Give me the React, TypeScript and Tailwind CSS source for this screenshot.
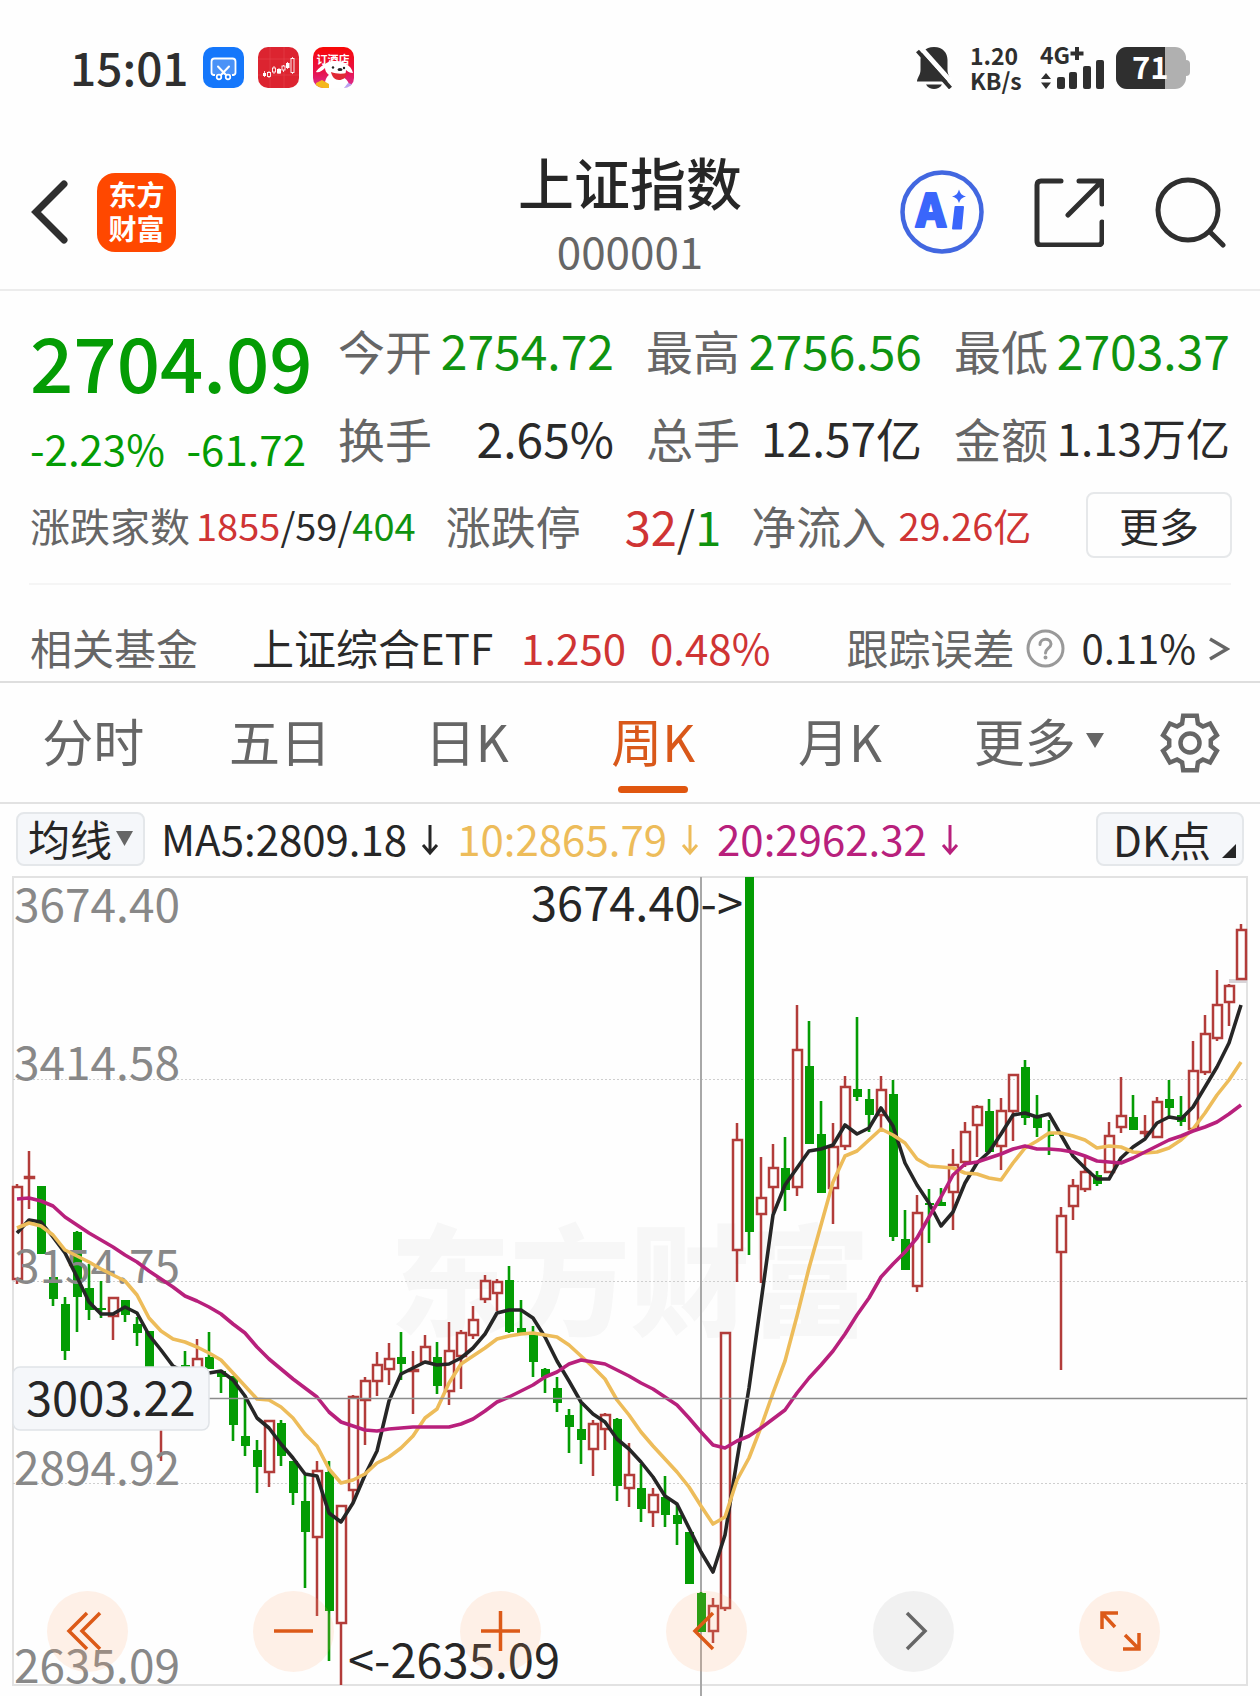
import React from "react";

const GREEN = "#049c04";
const RED = "#b23c3a";

// [direction, high, body top, body bottom, low] in chart units
type Candle = ["u" | "d", number, number, number, number];

const candles: Candle[] = [
  ["u", 1184, 1187, 1279, 1284], ["u", 1151, 1177, 1178, 1209], ["d", 1186, 1186, 1254, 1254], ["d", 1277, 1277, 1299, 1306],
  ["d", 1297, 1304, 1351, 1360], ["d", 1231, 1232, 1297, 1332], ["d", 1264, 1288, 1310, 1320], ["d", 1281, 1308, 1310, 1318],
  ["u", 1298, 1298, 1316, 1340], ["d", 1300, 1300, 1315, 1322], ["d", 1317, 1324, 1333, 1346], ["d", 1331, 1331, 1375, 1380],
  ["u", 1390, 1395, 1420, 1461], ["u", 1376, 1380, 1400, 1404], ["d", 1351, 1365, 1372, 1376], ["u", 1339, 1359, 1376, 1380],
  ["d", 1332, 1357, 1369, 1369], ["d", 1371, 1371, 1377, 1393], ["d", 1376, 1376, 1425, 1441], ["d", 1395, 1436, 1446, 1456],
  ["d", 1440, 1450, 1467, 1493], ["u", 1420, 1421, 1472, 1487], ["d", 1420, 1423, 1456, 1466], ["d", 1461, 1461, 1493, 1505],
  ["d", 1475, 1501, 1532, 1588], ["u", 1461, 1471, 1537, 1616], ["d", 1461, 1472, 1611, 1661], ["u", 1506, 1506, 1623, 1685],
  ["u", 1395, 1397, 1490, 1503], ["u", 1377, 1381, 1400, 1445], ["u", 1352, 1365, 1381, 1396], ["u", 1343, 1359, 1369, 1385],
  ["d", 1332, 1357, 1364, 1380], ["u", 1351, 1370, 1371, 1414], ["u", 1335, 1347, 1362, 1362], ["d", 1342, 1357, 1386, 1394],
  ["u", 1322, 1351, 1391, 1405], ["u", 1330, 1333, 1356, 1389], ["u", 1306, 1320, 1335, 1339], ["u", 1275, 1281, 1299, 1303],
  ["u", 1279, 1282, 1293, 1311], ["d", 1266, 1280, 1332, 1333], ["d", 1300, 1328, 1334, 1334], ["d", 1326, 1335, 1362, 1377],
  ["d", 1368, 1369, 1377, 1393], ["d", 1377, 1388, 1403, 1412], ["d", 1409, 1415, 1427, 1453], ["d", 1402, 1429, 1440, 1464],
  ["u", 1420, 1424, 1449, 1476], ["u", 1413, 1415, 1429, 1450], ["d", 1418, 1419, 1486, 1501], ["u", 1443, 1475, 1488, 1507],
  ["d", 1464, 1488, 1509, 1522], ["u", 1488, 1495, 1512, 1527], ["d", 1476, 1497, 1515, 1527], ["d", 1505, 1515, 1524, 1545],
  ["d", 1532, 1532, 1584, 1584], ["d", 1592, 1593, 1632, 1632], ["u", 1598, 1606, 1631, 1643], ["u", 1333, 1333, 1608, 1611],
  ["u", 1123, 1140, 1250, 1282], ["d", 877, 877, 1232, 1255], ["u", 1157, 1198, 1214, 1283], ["u", 1144, 1168, 1187, 1213],
  ["d", 1137, 1168, 1190, 1211], ["u", 1005, 1050, 1187, 1196], ["d", 1021, 1066, 1144, 1144], ["d", 1101, 1134, 1193, 1193],
  ["u", 1123, 1147, 1188, 1224], ["u", 1076, 1087, 1146, 1150], ["d", 1017, 1089, 1097, 1101], ["d", 1089, 1099, 1115, 1132],
  ["u", 1076, 1090, 1115, 1128], ["d", 1080, 1094, 1237, 1241], ["d", 1210, 1239, 1270, 1270], ["u", 1195, 1213, 1286, 1292],
  ["d", 1189, 1203, 1205, 1243], ["d", 1188, 1202, 1206, 1206], ["u", 1149, 1165, 1192, 1230], ["u", 1122, 1132, 1162, 1167],
  ["u", 1105, 1107, 1125, 1157], ["d", 1099, 1111, 1152, 1152], ["u", 1098, 1111, 1146, 1170], ["u", 1075, 1075, 1111, 1141],
  ["d", 1060, 1067, 1118, 1125], ["d", 1095, 1116, 1128, 1137], ["d", 1120, 1134, 1136, 1155], ["u", 1207, 1216, 1252, 1370],
  ["u", 1179, 1186, 1206, 1220], ["u", 1157, 1172, 1189, 1192], ["d", 1171, 1175, 1184, 1186], ["u", 1122, 1136, 1172, 1172],
  ["u", 1077, 1116, 1127, 1133], ["d", 1095, 1117, 1130, 1130], ["u", 1115, 1132, 1133, 1137], ["u", 1097, 1102, 1137, 1137],
  ["d", 1080, 1099, 1108, 1117], ["d", 1096, 1115, 1122, 1126], ["u", 1041, 1071, 1129, 1129], ["u", 1015, 1034, 1072, 1075],
  ["u", 970, 1005, 1038, 1041], ["u", 984, 986, 1002, 1026], ["u", 924, 930, 979, 979],
];

const ma5 = [
  1233, 1220, 1222, 1237, 1253, 1277, 1302, 1314, 1314, 1307, 1313, 1335, 1350, 1366, 1372, 1372, 1373, 1371, 1380, 1396,
  1418, 1428, 1444, 1458, 1474, 1476, 1513, 1522, 1503, 1475, 1451, 1401, 1374, 1368, 1362, 1365, 1364, 1358, 1348, 1334,
  1313, 1310, 1310, 1318, 1337, 1361, 1381, 1402, 1414, 1422, 1439, 1449, 1462, 1477, 1496, 1504, 1528, 1552, 1572, 1535,
  1460, 1388, 1302, 1215, 1185, 1168, 1151, 1149, 1145, 1125, 1134, 1128, 1108, 1126, 1163, 1185, 1203, 1226, 1212, 1183,
  1163, 1152, 1134, 1115, 1113, 1117, 1114, 1135, 1156, 1168, 1179, 1179, 1158, 1147, 1139, 1123, 1117, 1119, 1107, 1087,
  1067, 1043, 1005,
];
const ma10 = [
  1228, 1223, 1226, 1235, 1250, 1256, 1262, 1269, 1275, 1281, 1295, 1318, 1331, 1339, 1342, 1347, 1353, 1360, 1373, 1386,
  1399, 1400, 1407, 1418, 1434, 1446, 1469, 1483, 1480, 1474, 1463, 1457, 1448, 1436, 1418, 1409, 1383, 1364, 1356, 1348,
  1339, 1336, 1334, 1333, 1335, 1337, 1345, 1356, 1367, 1379, 1400, 1415, 1432, 1446, 1459, 1472, 1487, 1506, 1524, 1517,
  1480, 1458, 1427, 1393, 1361, 1316, 1268, 1225, 1182, 1156, 1151, 1140, 1129, 1135, 1143, 1159, 1166, 1167, 1168, 1173,
  1174, 1178, 1180, 1163, 1148, 1141, 1133, 1133, 1136, 1140, 1148, 1146, 1147, 1152, 1153, 1152, 1148, 1140, 1129, 1113,
  1095, 1080, 1062,
];
const ma20 = [
  1199, 1198, 1201, 1206, 1217, 1225, 1233, 1240, 1247, 1255, 1262, 1271, 1279, 1287, 1296, 1301, 1307, 1314, 1324, 1333,
  1347, 1359, 1369, 1379, 1388, 1397, 1412, 1422, 1426, 1430, 1431, 1429, 1428, 1427, 1427, 1427, 1427, 1424, 1419, 1411,
  1402, 1397, 1391, 1385, 1377, 1372, 1364, 1360, 1362, 1364, 1370, 1376, 1383, 1389, 1397, 1405, 1418, 1432, 1445, 1448,
  1441, 1436, 1428, 1419, 1410, 1393, 1378, 1365, 1351, 1334, 1315, 1298, 1277, 1264, 1252, 1238, 1217, 1197, 1175, 1164,
  1162, 1158, 1154, 1149, 1146, 1149, 1149, 1150, 1152, 1156, 1161, 1162, 1163, 1158, 1152, 1146, 1140, 1136, 1131, 1127,
  1122, 1114, 1105,
];

const candleX = (i: number) => 17 + i * 12;
const toPoints = (values: number[]) => values.map((y, i) => `${candleX(i)},${y}`).join(" ");

const gearPath = (() => {
  const pts: string[] = [];
  for (let t = 0; t < 6; t++) {
    for (const [off, r] of [[-22, 21], [-14, 28], [14, 28], [22, 21]]) {
      const a = ((t * 60 + off - 90) * Math.PI) / 180;
      pts.push(`${(32 + r * Math.cos(a)).toFixed(1)} ${(32 + r * Math.sin(a)).toFixed(1)}`);
    }
  }
  return `M${pts.join("L")}Z`;
})();

function StatusBar() {
  return (
    <div className="flex h-[135px] items-center justify-between pr-[70px] pl-[70px] text-[#2f2f2f]">
      <div className="flex items-center gap-[14px]">
        <span className="pb-1 text-[46px] leading-[56px] font-medium">15:01</span>
        <svg className="size-[41px]" viewBox="0 0 41 41" aria-label="截屏">
          <rect width="41" height="41" rx="10" fill="#1577fb" />
          <path d="M12 28h-1.500a2.500 2.500 0 0 1-2-2.500V14.500a3 3 0 0 1 3-3h18a3 3 0 0 1 3 3V25.500a2.500 2.500 0 0 1-2 2.500H29" fill="#4a92f7" stroke="#fff" strokeWidth="1.800" />
          <path d="M15 19.500L23.500 28.500M26 19.500L17.500 28.500" stroke="#fff" strokeWidth="2" strokeLinecap="round" />
          <circle cx="16" cy="30" r="2.300" fill="#1577fb" stroke="#fff" strokeWidth="1.700" />
          <circle cx="25" cy="30" r="2.300" fill="#1577fb" stroke="#fff" strokeWidth="1.700" />
        </svg>
        <svg className="size-[41px]" viewBox="0 0 41 41" aria-label="行情">
          <rect width="41" height="41" rx="10" fill="#dc2430" />
          <path d="M0 12h41M0 28h41M12 0v41M26 0v41" stroke="#e5454f" strokeWidth="0.600" />
          <path d="M6.500 24v6M11 24v7M16 19v8M21 21v6M25.500 18v7M29.500 15v7M34.500 10v17" stroke="#fff" strokeWidth="0.800" />
          <rect x="5" y="26" width="3" height="3" fill="#fff" />
          <rect x="9.500" y="25.500" width="3" height="4" fill="#dc2430" stroke="#fff" strokeWidth="0.900" />
          <rect x="14.500" y="21" width="3" height="4" fill="#dc2430" stroke="#fff" strokeWidth="0.900" />
          <rect x="19" y="22" width="4" height="4.500" fill="#fff" />
          <rect x="24" y="19" width="3" height="4" fill="#dc2430" stroke="#fff" strokeWidth="0.900" />
          <rect x="28" y="16" width="3.500" height="5" fill="#fff" />
          <rect x="33" y="11.500" width="3" height="14" fill="#dc2430" stroke="#fff" strokeWidth="0.900" />
        </svg>
        <svg className="size-[41px]" viewBox="0 0 41 41" aria-label="订酒店">
          <defs>
            <linearGradient id="hotel" x1="0" y1="0" x2="0" y2="1">
              <stop offset="0" stopColor="#f80806" />
              <stop offset="0.600" stopColor="#e8124a" />
              <stop offset="1" stopColor="#d9309a" />
            </linearGradient>
            <clipPath id="hotelClip"><rect width="41" height="41" rx="10" /></clipPath>
          </defs>
          <g clipPath="url(#hotelClip)">
            <rect width="41" height="41" fill="url(#hotel)" />
            <path d="M12 41c-1-7 2-12 4-13c-3-2-4-5-4-7c-3 3-6 5-9 4c1-2 6-7 9-8c4-4 18-4 21 0c4 2 6 5 7 9c-3 0-5-1-7-3c0 3-1 5-3 7c3 2 7 5 6 11z" fill="#fff" />
            <circle cx="20" cy="20.500" r="1.200" fill="#222" />
            <circle cx="31" cy="21" r="1.200" fill="#222" />
            <ellipse cx="27" cy="22.500" rx="2.500" ry="1.600" fill="#222" />
            <path d="M18 25c5 2 11 2 16 1c-1 5-4 7-8 7s-7-3-8-8z" fill="#e02a35" />
            <path d="M3 41v-5l6-3l7 4v4z" fill="#f5b81c" />
            <path d="M31 41l4-5l6 2v3z" fill="#b9a4f2" />
            <text x="20" y="17" textAnchor="middle" fontSize="11" fontWeight="700" fill="#fff">订酒店</text>
          </g>
        </svg>
      </div>
      <div className="flex items-center">
        <svg className="h-[42px] w-[36px]" viewBox="0 0 36 42" fill="#2f2f2f" aria-label="静音">
          <path d="M18 0C27 0 31.500 6 31.500 13V23C31.500 28 35 31 35 34.500H1C1 31 4.500 28 4.500 23V13C4.500 6 9 0 18 0Z" />
          <path d="M10 37.500H26C24 41 21 42 18 42S12 41 10 37.500Z" />
          <path d="M4 0L38 38" stroke="#fff" strokeWidth="5" />
          <path d="M1.500 4L34.500 41" stroke="#2f2f2f" strokeWidth="4" />
        </svg>
        <div className="ml-[18px] flex w-[54px] flex-col text-[23px] leading-[25px] font-bold">
          <span>1.20</span>
          <span>KB/s</span>
        </div>
        <svg className="ml-[16px] h-[42px] w-[66px]" viewBox="0 0 66 42" fill="#2f2f2f" aria-label="4G+">
          <text x="0" y="17" fontSize="23" fontWeight="700">4G</text>
          <path d="M35 0h4v4.500h4.500v4h-4.500v4.500h-4v-4.500h-4.500v-4h4.500z" />
          <path d="M6 26l5 6h-10zM6 42l5-6.500h-10z" />
          <rect x="17" y="30" width="8" height="12" rx="2" />
          <rect x="29" y="25" width="8" height="17" rx="2" />
          <rect x="43" y="19" width="8" height="23" rx="2" />
          <rect x="56" y="13" width="8" height="29" rx="2" />
        </svg>
        <svg className="ml-[10px] h-[42px] w-[74px]" viewBox="0 0 74 42" aria-label="电量 71">
          <rect x="66" y="13" width="8" height="16" rx="4" fill="#b0b0b0" />
          <rect width="70" height="42" rx="11" fill="#b0b0b0" />
          <path d="M11 0H49V42H11A11 11 0 0 1 0 31V11A11 11 0 0 1 11 0Z" fill="#2f2f2f" />
          <text x="16" y="32" fontSize="31" fontWeight="700" fill="#fff">71</text>
        </svg>
      </div>
    </div>
  );
}

function Header() {
  return (
    <header className="grid h-[156px] grid-cols-[1fr_auto_1fr] items-center border-b-2 border-[#ececec] px-[30px]">
      <div className="flex items-center gap-[27px]">
        <button aria-label="返回">
          <svg className="h-[66px] w-[40px]" viewBox="0 0 40 66" fill="none" stroke="#2f2f2f" strokeWidth="7" strokeLinecap="round">
            <path d="M34 5L6 33L34 61" />
          </svg>
        </button>
        <button className="flex size-[79px] flex-col items-center justify-center rounded-[18px] bg-[#ff4800] pb-0.5 text-[28px] leading-[34px] font-bold text-white">
          <span>东方</span>
          <span>财富</span>
        </button>
      </div>
      <div className="flex flex-col items-center pt-1">
        <h1 className="text-[56px] leading-[72px] font-medium text-[#262626]">上证指数</h1>
        <p className="text-[44px] leading-[66px] text-[#666]">000001</p>
      </div>
      <div className="flex items-center justify-end gap-[50px] pr-1">
        <button aria-label="Ai">
          <svg className="size-[84px]" viewBox="0 0 84 84">
            <circle cx="42" cy="42" r="39.500" fill="none" stroke="#4267e0" strokeWidth="4.500" />
            <text x="16" y="57" fontSize="45" fontWeight="900" fill="#3a66fb" stroke="#3a66fb" strokeWidth="2" strokeLinejoin="round">A</text>
            <path d="M55.500 37h7.500l-2 21.500h-8z" fill="#3a66fb" stroke="#3a66fb" strokeWidth="2" strokeLinejoin="round" />
            <path d="M59 19.500C60.500 24 61.500 25 66 26.500C61.500 28 60.500 29 59 33C57.500 29 56.500 28 52 26.500C56.500 25 57.500 24 59 19.500Z" fill="#3a66fb" />
          </svg>
        </button>
        <button aria-label="分享">
          <svg className="size-[70px]" viewBox="0 0 70 70" fill="none" stroke="#2f2f2f" strokeWidth="5" strokeLinecap="round" strokeLinejoin="round">
            <path d="M27 4H7Q3 4 3 8V64Q3 68 7 68H64Q68 68 68 64V45" />
            <path d="M45 4H68V27M67 5L34 38" />
          </svg>
        </button>
        <button aria-label="搜索">
          <svg className="size-[72px]" viewBox="0 0 72 72" fill="none" stroke="#2f2f2f" strokeWidth="5" strokeLinecap="round">
            <circle cx="34" cy="34" r="30" />
            <path d="M56 56L69 69" />
          </svg>
        </button>
      </div>
    </header>
  );
}

function Stat({ label, value, tone }: { label: string; value: string; tone: string }) {
  return (
    <div className="flex h-[88px] items-center justify-between whitespace-nowrap">
      <span className="text-[47px]">{label}</span>
      <span className={tone}>{value}</span>
    </div>
  );
}

function Quote() {
  return (
    <section className="border-b-2 border-[#dedede] pt-[14px] leading-none text-[#666]">
      <div className="grid grid-cols-4 gap-x-8 px-[30px]">
        <div className="row-span-2 flex flex-col whitespace-nowrap text-[#049c04]">
          <strong className="text-[76px] leading-[110px] font-medium">2704.09</strong>
          <div className="flex justify-between text-[42px] leading-[66px]">
            <span>-2.23%</span>
            <span>-61.72</span>
          </div>
        </div>
        <Stat label="今开" value="2754.72" tone="text-[48px] text-[#0f930f]" />
        <Stat label="最高" value="2756.56" tone="text-[48px] text-[#0f930f]" />
        <Stat label="最低" value="2703.37" tone="text-[48px] text-[#0f930f]" />
        <Stat label="换手" value="2.65%" tone="text-[48px] text-[#2a2a2a]" />
        <Stat label="总手" value="12.57亿" tone="text-[46px] text-[#2a2a2a]" />
        <Stat label="金额" value="1.13万亿" tone="text-[44px] text-[#2a2a2a]" />
      </div>
      <div className="flex h-[88px] items-center pr-[28px] pl-[30px] whitespace-nowrap">
        <span className="text-[40px]">涨跌家数</span>
        <span className="ml-1.5 text-[38px] text-[#2a2a2a]">
          <span className="text-[#cf3434]">1855</span>/59/<span className="text-[#0f930f]">404</span>
        </span>
        <span className="ml-[30px] text-[45px]">涨跌停</span>
        <span className="ml-11 text-[47px] text-[#2a2a2a]">
          <span className="text-[#cf3434]">32</span>/<span className="text-[#0f930f]">1</span>
        </span>
        <span className="ml-[30px] text-[45px]">净流入</span>
        <span className="ml-3 text-[38px] text-[#cf3434]">29.26亿</span>
        <button className="ml-auto h-[66px] w-[146px] rounded-lg border-2 border-[#e6e8ea] text-[40px] text-[#2a2a2a]">更多</button>
      </div>
      <div className="mx-[29px] mt-[14px] h-[2px] bg-[#f5f5f5]" />
      <a href="#fund" className="flex h-[96px] items-center px-[30px] pt-[27px] text-[42px] whitespace-nowrap">
        <span>相关基金</span>
        <span className="ml-[54px] text-[#2a2a2a]">上证综合ETF</span>
        <span className="ml-7 text-[#cf3434]">1.250</span>
        <span className="ml-6 text-[#cf3434]">0.48%</span>
        <span className="ml-auto">跟踪误差</span>
        <svg className="mt-1 ml-3 size-[39px]" viewBox="0 0 39 39" fill="none" stroke="#999">
          <circle cx="19.500" cy="19.500" r="17.500" strokeWidth="3" />
          <path d="M14 15.500C14 8.500 25 8.500 25 15C25 19 19.500 19.500 19.500 24" strokeWidth="3" strokeLinecap="round" />
          <circle cx="19.500" cy="28.500" r="1" strokeWidth="2" />
        </svg>
        <span className="ml-4 text-[40px] text-[#2a2a2a]">0.11%</span>
        <svg className="mt-1 ml-3 h-[26px] w-[22px]" viewBox="0 0 22 26" fill="none" stroke="#666" strokeWidth="3.500">
          <path d="M2 3L19 13L2 23" />
        </svg>
      </a>
    </section>
  );
}

const tabs = ["分时", "五日", "日K", "周K", "月K"];

function Tabs() {
  return (
    <nav className="grid h-[121px] grid-cols-[repeat(6,minmax(0,1fr))_140px] border-b-2 border-[#e2e2e2] text-[51px] leading-none whitespace-nowrap text-[#666]">
      {tabs.map((tab) => (
        <button key={tab} className={tab === "周K" ? "relative pb-1 text-[#d9581a]" : "relative pb-1"}>
          {tab}
          {tab === "周K" && (
            <span className="absolute bottom-[9px] left-1/2 h-[7px] w-[70px] -translate-x-1/2 rounded-full bg-[#e0560f]" />
          )}
        </button>
      ))}
      <button className="flex items-center justify-center gap-2.5 pb-1 pl-6">
        更多
        <svg className="h-[15px] w-[18px] shrink-0" viewBox="0 0 18 15" fill="#666"><path d="M0 0H18L9 15Z" /></svg>
      </button>
      <button aria-label="设置" className="flex items-center justify-center">
        <svg className="size-[64px]" viewBox="0 0 64 64" fill="none" stroke="#666" strokeWidth="4.500">
          <path d={gearPath} />
          <circle cx="32" cy="32" r="9.500" />
        </svg>
      </button>
    </nav>
  );
}

function DownArrow() {
  return (
    <svg className="mt-1 h-[32px] w-[18px]" viewBox="0 0 18 32" fill="none" stroke="currentColor" strokeWidth="3">
      <path d="M9 1V29M2 21L9 29L16 21" />
    </svg>
  );
}

function Indicators() {
  return (
    <div className="flex h-[72px] items-center px-4 pb-0.5 text-[42px] leading-[50px] whitespace-nowrap text-[#262626]">
      <button className="flex h-[54px] w-[129px] items-center justify-center gap-1 rounded-lg border-2 border-[#e4e7ea] bg-[#f5f7fa] pb-0.5">
        均线
        <svg className="h-[15px] w-[17px]" viewBox="0 0 17 15" fill="#666"><path d="M0 0H17L8.500 15Z" /></svg>
      </button>
      <span className="ml-4 flex items-center gap-3.5 pb-0.5">MA5:2809.18<DownArrow /></span>
      <span className="ml-[18px] flex items-center gap-3.5 pb-0.5 text-[#edbc5a]">10:2865.79<DownArrow /></span>
      <span className="ml-[18px] flex items-center gap-3.5 pb-0.5 text-[#b8207c]">20:2962.32<DownArrow /></span>
      <button className="relative ml-auto h-[54px] w-[148px] rounded-lg border-2 border-[#e4e7ea] bg-[#f5f7fa] pr-4 pb-0.5">
        DK点
        <svg className="absolute right-1.5 bottom-1.5 size-[14px]" viewBox="0 0 14 14" fill="#262626"><path d="M14 0V14H0Z" /></svg>
      </button>
    </div>
  );
}

const axis = [
  { label: "3674.40", y: 922 },
  { label: "3414.58", y: 1080 },
  { label: "3154.75", y: 1283 },
  { label: "2894.92", y: 1485 },
  { label: "2635.09", y: 1683 },
];

const controls = [
  { name: "最早", d: "M40 22L22 40L40 58M53 22L35 40L53 58" },
  { name: "缩小", d: "M21 40H60" },
  { name: "放大", d: "M21 40H60M40.500 20V60" },
  { name: "左移", d: "M47 22L29 40L47 58" },
  { name: "右移", d: "M34 22L52 40L34 58" },
  { name: "全屏", d: "M39 22H23V38M23 22L36 36M60 42V58H44M60 58L46 44" },
];

function Chart() {
  return (
    <div className="relative">
      <svg className="block w-full" viewBox="0 876 1260 820" fill="none" role="img" aria-label="周K线图">
        <text x="630" y="1327" textAnchor="middle" fontSize="120" fontWeight="900" fill="#f7f7f7">东方财富</text>
        <rect x="13" y="877" width="1234" height="808" stroke="#e2e2e2" strokeWidth="2" />
        {[1079, 1281, 1483].map((y) => (
          <path key={y} d={`M13 ${y}.5H1247`} stroke="#cfcfcf" strokeDasharray="2 2" />
        ))}
        <path d="M701 877V1696" stroke="#a8a8a8" strokeWidth="2" />
        <rect x="1229" y="979" width="18" height="4" fill="#d8d4d8" />
        {candles.map(([dir, high, top, bottom, low], i) => {
          const x = candleX(i);
          if (dir === "d") {
            return (
              <g key={i} stroke={GREEN}>
                <path d={`M${x} ${high}V${low}`} strokeWidth="2.600" />
                <path d={`M${x + 0.5} ${top}V${bottom}`} strokeWidth="9" />
              </g>
            );
          }
          return (
            <g key={i} stroke={RED} strokeWidth="2.500">
              <path d={`M${x} ${high}V${top}M${x} ${bottom}V${low}`} />
              <rect x={x - 4} y={top} width="9" height={bottom - top} />
            </g>
          );
        })}
        <g fontSize="46" fill="#888">
          {axis.map((a) => (
            <text key={a.label} x="14" y={a.y}>{a.label}</text>
          ))}
        </g>
        <polyline points={toPoints(ma5)} stroke="#262626" strokeWidth="3.600" strokeLinejoin="round" />
        <polyline points={toPoints(ma10)} stroke="#edbc5a" strokeWidth="3.600" strokeLinejoin="round" />
        <polyline points={toPoints(ma20)} stroke="#b8207c" strokeWidth="3.600" strokeLinejoin="round" />
        <path d="M13 1398.500H1247" stroke="#8c8c8c" strokeWidth="1.500" />
        <g fontSize="47" fill="#262626">
          <text x="531" y="921">3674.40-&gt;</text>
          <text x="348" y="1678">&lt;-2635.09</text>
          <rect x="13" y="1367" width="196" height="63" rx="7" fill="#f5f7fa" stroke="#e0e4e8" strokeWidth="1.500" />
          <text x="26" y="1416">3003.22</text>
        </g>
      </svg>
      <div className="absolute inset-x-0 bottom-6 flex justify-between pr-[100px] pl-[47px]">
        {controls.map((c) => (
          <button
            key={c.name}
            aria-label={c.name}
            className={
              c.name === "右移"
                ? "size-[81px] rounded-full bg-black/5 text-[#666]"
                : "size-[81px] rounded-full bg-[rgba(255,165,115,0.16)] text-[#dc5a18]"
            }
          >
            <svg className="size-full" viewBox="0 0 81 81" fill="none" stroke="currentColor" strokeWidth="3.500">
              <path d={c.d} />
            </svg>
          </button>
        ))}
      </div>
    </div>
  );
}

export default function App() {
  return (
    <main className="w-full overflow-hidden bg-[#fefefe] font-['Noto_Sans_CJK_SC',sans-serif]">
      <StatusBar />
      <Header />
      <Quote />
      <Tabs />
      <Indicators />
      <Chart />
    </main>
  );
}
